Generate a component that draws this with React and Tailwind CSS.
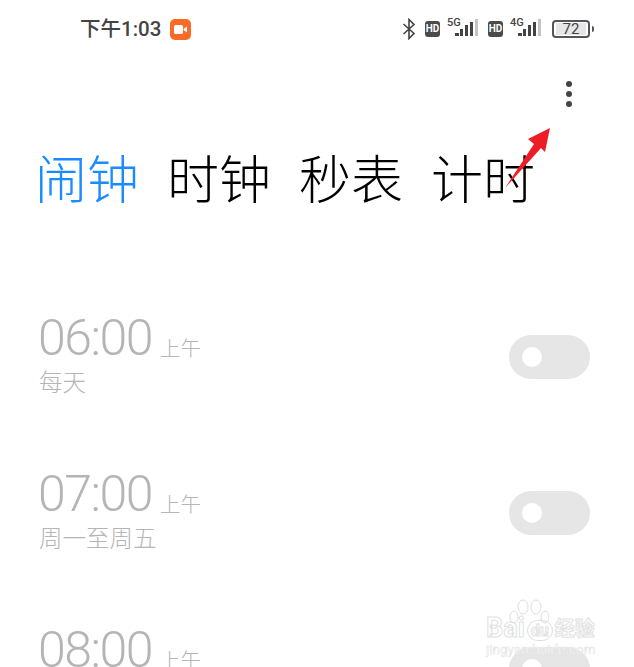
import React from "react";

const FONT = "font-['Roboto','Noto_Sans_CJK_SC',sans-serif]";

const alarms = [
  { time: "06:00", repeat: "每天" },
  { time: "07:00", repeat: "周一至周五" },
  { time: "08:00", repeat: "" },
];

function Signal({ label }) {
  return (
    <div className="relative ml-[7px] h-[24px] w-[32px]">
      <span className="absolute left-0 top-0 text-[11px] font-medium leading-[11px] text-[#444]">{label}</span>
      <svg width="32" height="24" viewBox="0 0 32 24" className="absolute inset-0">
        <rect x="8" y="16" width="4" height="3" fill="#444" />
        <rect x="13" y="12" width="3" height="7" fill="#444" />
        <rect x="18" y="8" width="3" height="11" fill="#444" />
        <rect x="23" y="5" width="3" height="14" fill="#444" />
        <rect x="28" y="2" width="3" height="17" fill="#c4c4c4" />
      </svg>
    </div>
  );
}

function Hd() {
  return (
    <span className="flex h-[16px] w-[15px] items-center justify-center rounded-[3px] bg-[#4a4a4a] text-[10px] font-bold leading-none text-white">
      HD
    </span>
  );
}

function Bluetooth() {
  return (
    <svg width="14" height="22" viewBox="0 0 14 22" fill="none" stroke="#444" strokeWidth="1.6">
      <path d="M1.5 6 L12 15.5 L7 20.5 V1.5 L12 6.5 L1.5 16" />
    </svg>
  );
}

function StatusBar() {
  return (
    <div className="flex h-[58px] items-center justify-between pl-[80px] pr-[40px]">
      <div className="flex items-center gap-[9px]">
        <span className="text-[20.5px] font-medium leading-none text-[#444]">下午1:03</span>
        <span className="flex h-[21px] w-[21px] items-center justify-center rounded-[5px] bg-[#fb6a26]">
          <svg width="13" height="9" viewBox="0 0 13 9" fill="#fff">
            <rect x="0" y="0" width="9" height="9" rx="1.5" />
            <path d="M9.5 4 L13 1.5 V7.5 L9.5 5z" />
          </svg>
        </span>
      </div>
      <div className="flex items-center">
        <Bluetooth />
        <div className="ml-[9px] flex items-center">
          <Hd />
          <Signal label="5G" />
        </div>
        <div className="ml-[9px] flex items-center">
          <Hd />
          <Signal label="4G" />
        </div>
        <div className="ml-[10px] flex items-center gap-[2px]">
          <div className="flex h-[18px] w-[38px] items-center justify-center rounded-[4px] border-2 border-[#555] text-[15px] leading-none text-[#444]">
            <span className="flex h-[12px] w-[30px] items-center justify-center bg-[#e6e6e6]">72</span>
          </div>
          <span className="h-[6px] w-[2px] rounded-r-sm bg-[#555]" />
        </div>
      </div>
    </div>
  );
}

function Toggle() {
  return (
    <div className="flex h-[44px] w-[81px] shrink-0 items-center rounded-full bg-[#e6e6e6] pl-[13px]">
      <span className="h-[20px] w-[20px] rounded-full bg-white" />
    </div>
  );
}

function AlarmRow({ time, repeat }) {
  return (
    <div className="flex h-[156px] shrink-0 items-start justify-between pr-[44px]">
      <div>
        <div className="-ml-[1px] flex items-end">
          <span className="text-[50px] font-light leading-[48px] tracking-[-1.5px] text-[#b5b5b5]">{time}</span>
          <span className="mb-[1px] ml-[8px] text-[20.5px] font-light leading-[24px] text-[#b5b5b5]">上午</span>
        </div>
        <div className="mt-[8px] text-[23.5px] font-light leading-[26px] text-[#b5b5b5]">{repeat}</div>
      </div>
      <div className="mt-[21px]">
        <Toggle />
      </div>
    </div>
  );
}

export default function App() {
  return (
    <div className={`relative h-[667px] w-[634px] overflow-hidden bg-white ${FONT}`}>
      <StatusBar />

      <div className="flex justify-end pr-[62px] pt-[23px]">
        <div className="flex flex-col gap-[4px]">
          <span className="h-[6px] w-[6px] rounded-full bg-[#444]" />
          <span className="h-[6px] w-[6px] rounded-full bg-[#444]" />
          <span className="h-[6px] w-[6px] rounded-full bg-[#444]" />
        </div>
      </div>

      <div className="mt-[45px] flex gap-[28px] pl-[35px] text-[52px] font-light leading-[60px] text-black">
        <span className="text-[#1a8cff]">闹钟</span>
        <span>时钟</span>
        <span>秒表</span>
        <span>计时</span>
      </div>

      <div className="mt-[102px] flex flex-col pl-[39px]">
        {alarms.map((a) => (
          <AlarmRow key={a.time} time={a.time} repeat={a.repeat} />
        ))}
      </div>

      {/* annotation arrow */}
      <svg width="60" height="70" viewBox="0 0 60 70" className="absolute left-[500px] top-[125px]">
        <path d="M5 63 L34 19 L28 14 L50 3 L45 27 L41 23 Z" fill="#ee1c25" />
      </svg>

      {/* watermark */}
      <div className="absolute left-[486px] top-[598px] text-white">
        <svg width="40" height="30" viewBox="0 0 40 30" fill="none" stroke="#dcdcdc" strokeWidth="1" className="absolute left-[23px] top-0">
          <ellipse cx="14" cy="9" rx="5" ry="7" />
          <ellipse cx="27" cy="9" rx="5" ry="7" />
          <ellipse cx="5" cy="19" rx="4" ry="6" />
          <ellipse cx="36" cy="19" rx="4" ry="6" />
        </svg>
        <div className="flex items-end pt-[17px] text-[27px] font-bold leading-[26px] [-webkit-text-stroke:1px_#e2e2e2]">
          <span>Bai</span>
          <span className="mx-[2px] rounded-full border border-[#dcdcdc] px-[3px] text-[16px] leading-[19px]">du</span>
          <span className="text-[20px] leading-[24px]">经验</span>
        </div>
        <div className="mt-[1px] text-[13.5px] leading-[14px] [-webkit-text-stroke:0.5px_#e2e2e2]">jingyan.baidu.com</div>
      </div>
    </div>
  );
}
